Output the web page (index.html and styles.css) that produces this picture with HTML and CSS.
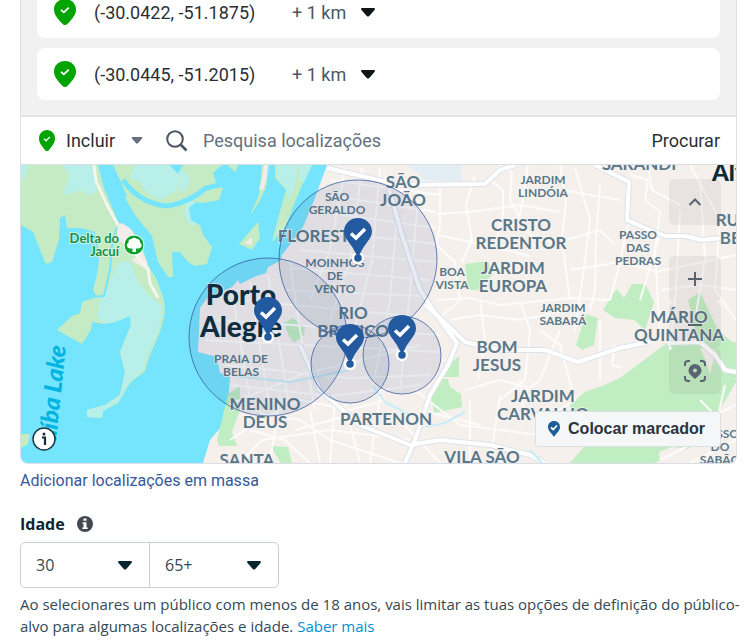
FILE: index.html
```html
<!DOCTYPE html>
<html lang="pt">
<head>
    <meta charset="UTF-8">
    <meta name="viewport" content="width=device-width, initial-scale=1.0">
    <title>Localizações</title>
    <link rel="stylesheet" href="styles.css">
</head>
<body>
    <svg class="defs" aria-hidden="true">
        <symbol id="pin" viewBox="0 0 22 26" preserveAspectRatio="none">
            <path fill="#00a400" d="M11 0C4.800 0 0 4.500 0 10.400c0 5.200 3.700 9 7.600 13.600 2.300 2.700 4.500 2.700 6.800 0C18.300 19.400 22 15.600 22 10.400 22 4.500 17.200 0 11 0z"/>
            <path fill="none" stroke="#fff" stroke-width="1.800" d="M7 10.800l2.800 2.500 5-4.600"/>
        </symbol>
        <symbol id="caret" viewBox="0 0 14 9">
            <path fill="currentColor" d="M1.500 0h11C14 0 14.300 1.100 13.500 2L8.500 7.800c-1 1.100-2 1.100-3 0L.5 2C-.3 1.100 0 0 1.500 0z"/>
        </symbol>
    </svg>

    <div class="panel">
        <ul class="locations">
            <li class="location">
                <svg class="pin"><use href="#pin"/></svg>
                <span class="coords">(-30.0422, -51.1875)</span>
                <span class="dropdown">
                    <select class="radius" aria-label="Raio"><option>+ 1 km</option></select>
                    <svg class="caret"><use href="#caret"/></svg>
                </span>
            </li>
            <li class="location">
                <svg class="pin"><use href="#pin"/></svg>
                <span class="coords">(-30.0445, -51.2015)</span>
                <span class="dropdown">
                    <select class="radius" aria-label="Raio"><option>+ 1 km</option></select>
                    <svg class="caret"><use href="#caret"/></svg>
                </span>
            </li>
        </ul>

        <div class="search-bar">
            <svg class="pin small"><use href="#pin"/></svg>
            <span class="dropdown">
                <select class="mode" aria-label="Incluir ou excluir"><option>Incluir</option></select>
                <svg class="caret grey"><use href="#caret"/></svg>
            </span>
            <svg class="search-icon" viewBox="0 0 22 22">
                <circle cx="9" cy="9" r="7.800" fill="none" stroke="#4b5664" stroke-width="2"/>
                <path d="M14.500 14.500l6 6" stroke="#4b5664" stroke-width="2.600"/>
            </svg>
            <input class="search" type="text" placeholder="Pesquisa localizações" aria-label="Pesquisa localizações">
            <button class="browse" type="button">Procurar</button>
        </div>

        <div class="map">
            <svg class="map-canvas" viewBox="21 165 715 298">
                <rect x="21" y="165" width="715" height="298" fill="#75e5fe"/>

                <!-- delta islands -->
                <g fill="#c4ebc4">
                    <path d="M21 165H98L104 188 118 222 132 230 142 246 148 265 157 280 164 300 165 312 160 332 150 355 145 371 130 383 118 403 103 411 102 418 87 417 87 410 105 405 120 395 125 372 120 352 131 325 130 316 115 322 104 324 92 322 91 330 82 344 57 330 72 316 80 313 82 302 97 297 93 290 97 275 99 260 98 245 95 232 80 228 67 228 65 215 60 218 59 240 52 262 46 264 40 250 33 232 21 225z"/>
                    <path d="M113 165H222L213 173 217 186 223 188 219 200 203 203 188 201 186 212 190 222 200 225 203 235 212 247 207 264 195 266 188 262 180 252 172 252 173 277 168 277 158 262 152 236 135 215 125 198 127 196 120 180z"/>
                    <path d="M228 165H238L236 172 230 168z"/>
                    <path d="M262 165H269L266 188 258 204 250 215 259 195z"/>
                    <path d="M258 222L260 238 252 250 239 244z"/>
                    <path d="M275 165H312L302 185 293 207 286 226 272 242 276 226 282 204 286 190 275 178z"/>
                    <path d="M21 434H30L28 444 21 448z"/>
                </g>
                <g fill="#b8efe8">
                    <path d="M63 165H93L97 190 90 196 81 190 62 196 70 175z"/>
                    <path d="M21 165H28L24 178 21 182z"/>
                    <path d="M135 165H182L177 190 160 200 146 192 140 182 130 178z"/>
                    <path d="M115 268L122 261 131 263 137 280 149 295 163 307 158 332 148 355 143 370 130 382 117 402 103 411 102 418 87 417 87 410 105 405 120 395 125 372 120 352 131 325 130 316 115 322 104 324 97 316 100 299 108 288z"/>
                    <path d="M277 165H298L294 190 288 200 286 188 277 178z"/>
                    <path d="M300 165H312L304 182 299 180z"/>
                    <path d="M187 200L196 202 189 208 191 220 198 224 190 226 184 214z"/>
                    <path d="M180 168L190 178 186 190 180 192z"/>
                </g>
                <path fill="#f3ece8" d="M117 226L122 223 131 229 137 240 147 262 147 270 131 260 138 256 128 246 117 240z"/>
                <path fill="#f3ece8" d="M244 243L252 237 252 245z"/>
                <path fill="none" stroke="#75e5fe" stroke-width="5" d="M123 180Q140 204 168 206Q190 202 206 188L224 184"/>
                <path fill="none" stroke="#75e5fe" stroke-width="2" d="M117 227L112 245 110 270 104 296 88 297"/>
                <path fill="none" stroke="#f8f5ef" stroke-width="3" stroke-linejoin="round" d="M94 165L96 181 107 205 118 225M135 254L148 269 150 283 158 298"/>
                <path fill="none" stroke="#f3ece8" stroke-width="4" d="M266 165L264 180 261 190"/>
                <path stroke="#75e5fe" fill="#75e5fe" stroke-width="2" d="M171 165H182L178 172z"/>

                <!-- mainland -->
                <path fill="#f6f0ed" d="M327 165L315 198 303 227 282 255 280 261 268 267 266 273 254 277 240 284 238 280 232 287 207 298 200 308 198 352 217 357 220 373 230 376 227 420 210 440 203 463H736V165z"/>
                <path fill="#e3edf4" d="M408 165H462L461 182 425 180z"/>
                <g fill="#c1edc2">
                    <path d="M228 394L240 386 240 410 232 432 237 446 219 446 217 440z"/>
                    <path d="M270 446L288 447 292 463H281z"/>
                    <path d="M284 323L293 318 305 327 304 335 294 343 288 334z"/>
                    <path d="M465 264L488 261 493 274 478 290 468 290z"/>
                    <path d="M459 356V377H442L448 366z"/>
                    <path d="M437 379H448L450 387 461 394 462 407 434 413 431 396z"/>
                    <path d="M603 310L612 295 617 289 624 298 632 284 645 284 654 302 645 330 634 320 615 318z"/>
                    <path d="M586 314L598 318 594 345 582 350 576 345z"/>
                    <path d="M736 342L710 350 690 340 667 343 648 357 620 378 602 386 585 392 570 405 575 420 590 440 570 463H655L690 448 722 406 736 382z"/>
                    <path d="M688 300L700 292 718 330 736 345V372L700 350z"/>
                    <path d="M660 375L680 360 690 372 700 362 712 345 700 340 680 345z"/>
                </g>
                <path fill="#f6f0ed" d="M659 452L672 447 695 450 690 463H660zM700 348L716 350 710 374 706 362z"/>

                <!-- minor streets -->
                <g fill="none" stroke="#fdfcfb" stroke-width="2" stroke-linejoin="round">
                    <path d="M330 180L440 195M325 195L436 212M322 212L436 228M312 230L436 244M300 250L436 262M290 268L430 280M285 290L420 296M240 300L410 316M215 320L440 335M205 340L300 345 440 352M225 365L350 378 430 375M230 385L330 396 420 385"/>
                    <path d="M345 168L330 250 310 300M362 168L350 260 330 320M380 168L372 260 352 340M398 200L390 300 372 390M418 200L410 290 400 390M232 290L250 400M250 282L270 410M268 275L290 410M290 262L300 330 315 410M228 405L300 375 420 345"/>
                    <path d="M440 182V225L436 244 455 262 460 300 438 320M475 175L466 205 472 240 462 262M490 180L503 190V215L495 245M436 214L470 212 520 205 560 212M437 235L480 244 530 256M500 166L512 172 510 200 530 235 560 245M528 165L525 185 520 215M560 165L566 200 562 240 570 300"/>
                    <path d="M436 300L470 298 500 305 530 302 570 298 610 300M450 320L480 315 520 320 560 312M480 300L485 340 478 380M520 300L530 330 525 380 500 400M540 330L560 345 575 400 550 415M465 390L500 380 530 388M470 400V463M500 395L490 463M520 380L525 420"/>
                    <path d="M575 168L590 220 585 260 575 330M600 185L596 240 595 290 590 310M628 225L618 270 610 300M630 175L648 180 645 200 660 212 655 250 660 340M648 165L652 190 680 205M680 210L676 290 670 350M700 180L705 260 695 320M562 190L620 200M566 240L600 230 615 245M570 270L620 262 660 272M655 272L736 255M660 290L700 285 736 290M660 235L640 300M690 165L720 220 715 290 736 320"/>
                    <path d="M240 400L265 415 300 420 330 440 400 463M230 440L260 420 300 400 350 410 385 400M280 395L270 463M310 410L320 463M335 400L330 463M345 405L360 463M380 395L370 463M240 463L262 440 330 430 410 440M250 430L285 440 310 463M415 390L460 425 540 435M420 410L480 425M400 420L440 463M295 430L350 415M560 330L540 380 520 395M600 320V380M615 345L612 365 622 368M700 400L715 415 736 405M725 385L715 430 736 440M690 463L736 440M660 460L700 440"/>
                </g>
                <!-- avenues -->
                <g fill="none" stroke-linejoin="round">
                    <g stroke="#dde3ec" stroke-width="6">
                        <path d="M327 168L400 185 485 184 500 170 515 165"/>
                        <path d="M385 175L402 235 420 290 440 320 457 343 448 365 430 395 415 440 405 463"/>
                        <path d="M425 305L440 318 465 342 500 350 545 350 578 362 620 348 650 342"/>
                        <path d="M595 165L629 182 627 220 645 228 665 236 685 236 702 240 722 238 736 242"/>
                        <path d="M300 345L320 390 360 425 410 445 440 440 490 445 530 455 545 463"/>
                        <path d="M668 343L700 342 715 355 725 370 736 372"/>
                    </g>
                    <g stroke="#fff" stroke-width="4">
                        <path d="M327 168L400 185 485 184 500 170 515 165"/>
                        <path d="M385 175L402 235 420 290 440 320 457 343 448 365 430 395 415 440 405 463"/>
                        <path d="M425 305L440 318 465 342 500 350 545 350 578 362 620 348 650 342"/>
                        <path d="M595 165L629 182 627 220 645 228 665 236 685 236 702 240 722 238 736 242"/>
                        <path d="M300 345L320 390 360 425 410 445 440 440 490 445 530 455 545 463"/>
                        <path d="M668 343L700 342 715 355 725 370 736 372"/>
                    </g>
                    <path stroke="#c7eef8" stroke-width="2" d="M232 376L290 382 350 370M372 385L385 402 410 415M425 427L445 423 465 412M530 450L542 463"/>
                </g>

                <!-- place labels -->
                <g class="label small-label">
                    <text x="337" y="201">SÃO</text><text x="337" y="214">GERALDO</text>
                    <text x="335" y="267">MOINHOS</text><text x="335" y="280">DE</text><text x="335" y="293">VENTO</text>
                    <text x="241" y="363">PRAIA DE</text><text x="241" y="376">BELAS</text>
                    <text x="452" y="276">BOA</text><text x="452" y="289">VISTA</text>
                    <text x="543" y="184">JARDIM</text><text x="543" y="197">LINDÓIA</text>
                    <text x="638" y="239">PASSO</text><text x="638" y="252">DAS</text><text x="638" y="265">PEDRAS</text>
                    <text x="563" y="312">JARDIM</text><text x="563" y="325">SABARÁ</text>
                    <text x="720" y="438">PASSO</text><text x="720" y="451">DO</text><text x="720" y="464">SABÃO</text>
                </g>
                <g class="label">
                    <text x="403" y="188">SÃO</text><text x="403" y="206">JOÃO</text>
                    <text x="319" y="242">FLORESTA</text>
                    <text x="353" y="319">RIO</text><text x="353" y="337">BRANCO</text>
                    <text x="265" y="410">MENINO</text><text x="265" y="428">DEUS</text>
                    <text x="247" y="466">SANTA</text>
                    <text x="386" y="425">PARTENON</text>
                    <text x="482" y="463">VILA SÃO</text>
                    <text x="513" y="274">JARDIM</text><text x="513" y="292">EUROPA</text>
                    <text x="521" y="231">CRISTO</text><text x="521" y="249">REDENTOR</text>
                    <text x="639" y="170">SARANDI</text>
                    <text x="679" y="323">MÁRIO</text><text x="679" y="341">QUINTANA</text>
                    <text x="497" y="353">BOM</text><text x="497" y="371">JESUS</text>
                    <text x="543" y="402">JARDIM</text><text x="543" y="420">CARVALHO</text>
                    <text x="746" y="226">RUBEM</text><text x="746" y="244">BERTA</text>
                </g>
                <g class="label city">
                    <text x="241" y="305">Porto</text><text x="241" y="337">Alegre</text>
                </g>
                <text class="label city near" x="712" y="181">Alvorada</text>
                <g class="label park">
                    <text x="119" y="243">Delta do</text><text x="119" y="256">Jacuí</text>
                </g>
                <text class="lake" transform="translate(66 346) rotate(-84)">aíba Lake</text>
                <circle cx="134" cy="245" r="10" fill="#0aa12c" stroke="#fff"/>
                <path fill="#fff" d="M132.500 252v-3.500h-3a3.200 3.200 0 0 1-1-6 3.200 3.200 0 0 1 3-3.500 4 4 0 0 1 5.500 0 3.200 3.200 0 0 1 3 3.500 3.200 3.200 0 0 1-1 6h-3v3.500z"/>

                <!-- targeting radius -->
                <g fill="#2a4f85" fill-opacity=".11" stroke="#31589d" stroke-opacity=".75">
                    <circle cx="358" cy="259" r="79"/>
                    <circle cx="268" cy="337" r="79"/>
                    <circle cx="350" cy="364" r="39"/>
                    <circle cx="402" cy="355" r="39"/>
                </g>

                <g id="marker" transform="translate(358 258)">
                    <circle r="5" fill="#235a9f" stroke="#fff" stroke-width="2.500"/>
                    <path fill="#235a9f" d="M0-40C-8-40-14-34-14-26.500-14-19-6-14-2-4Q0-1 2-4C6-14 14-19 14-26.500 14-34 8-40 0-40z"/>
                    <path fill="none" stroke="#fff" stroke-width="3.500" d="M-7-24.500l5 4.500 9-9"/>
                </g>
                <use href="#marker" x="-90" y="79"/>
                <use href="#marker" x="-8" y="106"/>
                <use href="#marker" x="44" y="97"/>
            </svg>

            <button class="attribution" type="button" aria-label="Informações do mapa">
                <svg viewBox="0 0 24 24">
                    <circle cx="12" cy="12" r="11" fill="#fff" stroke="#1c3a44" stroke-width="1.500"/>
                    <path d="M10 10.500h3V18" fill="none" stroke="#1c2b33" stroke-width="2.200"/>
                    <circle cx="12" cy="7" r="1.500" fill="#1c2b33"/>
                </svg>
            </button>

            <div class="controls">
                <button class="control" type="button" aria-label="Recolher">
                    <svg viewBox="0 0 24 24"><path d="M6.500 15l5.500-5.500 5.500 5.500"/></svg>
                </button>
                <div class="control-group">
                    <button class="control" type="button" aria-label="Ampliar">
                        <svg viewBox="0 0 24 24"><path d="M12 5v14M5 12h14"/></svg>
                    </button>
                    <button class="control" type="button" aria-label="Reduzir">
                        <svg viewBox="0 0 24 24"><path d="M5 12h14"/></svg>
                    </button>
                    <button class="control" type="button" aria-label="Centrar">
                        <svg viewBox="0 0 24 24">
                            <path d="M2 7V5q0-3 3-3h2M17 2h2q3 0 3 3v2M22 17v2q0 3-3 3h-2M7 22H5q-3 0-3-3v-2"/>
                            <path class="solid" d="M12 5a6.500 6.500 0 0 0-6.500 6.500c0 3.500 3.500 5.500 6.500 8.500 3-3 6.500-5 6.500-8.500A6.500 6.500 0 0 0 12 5zm0 4.500a2 2 0 1 1 0 4 2 2 0 0 1 0-4z"/>
                        </svg>
                    </button>
                </div>
            </div>

            <button class="drop-pin" type="button">
                <svg viewBox="0 0 12 16">
                    <path fill="#1b5f96" d="M6 0C2.500 0 0 2.500 0 6c0 4 4 6.500 6 10 2-3.500 6-6 6-10 0-3.500-2.500-6-6-6z"/>
                    <path fill="none" stroke="#fff" stroke-width="1.700" d="M3 6.500l2.200 2L9 4.500"/>
                </svg>
                Colocar marcador
            </button>
        </div>
    </div>

    <a class="bulk" href="#">Adicionar localizações em massa</a>

    <div class="age">
        <div class="age-title">
            <h2>Idade</h2>
            <svg viewBox="0 0 16 16">
                <circle cx="8" cy="8" r="8" fill="#444950"/>
                <path fill="#fff" d="M6.500 2.500h3v2.300h-3zM5.500 6.200h4v5.300h1.200V13H5.300v-1.500h1.200V7.700h-1z"/>
            </svg>
        </div>
        <div class="age-range">
            <span class="dropdown">
                <select aria-label="Idade mínima"><option>30</option></select>
                <svg class="caret"><use href="#caret"/></svg>
            </span>
            <span class="dropdown">
                <select aria-label="Idade máxima"><option>65+</option></select>
                <svg class="caret"><use href="#caret"/></svg>
            </span>
        </div>
        <p>Ao selecionares um público com menos de 18 anos, vais limitar as tuas opções de definição do público-alvo para algumas localizações e idade. <a href="#">Saber mais</a></p>
    </div>
</body>
</html>
```
FILE: styles.css
```css
* {
    box-sizing: border-box;
}
body {
    margin: 0;
    padding: 0 8px 0 20px;
    font-family: Roboto, Arial, sans-serif;
    font-size: 18px;
    color: #2b2f33;
    background: #fff;
    overflow: hidden;
}
button, select, input {
    font: inherit;
    color: inherit;
    background: none;
    border: none;
    padding: 0;
    margin: 0;
}
select {
    appearance: none;
    width: 100%;
}
a {
    text-decoration: none;
}
svg {
    display: block;
    flex: none;
}
.defs {
    position: absolute;
    width: 0;
    height: 0;
}
.panel {
    margin-right: 9px;
    border: 1px solid #dadfe6;
    border-top: none;
    border-radius: 0 0 8px 8px;
    overflow: hidden;
}

/* selected locations, scrolled to the last one */
.locations {
    display: flex;
    flex-direction: column;
    justify-content: flex-end;
    gap: 10px;
    height: 115px;
    margin: 0;
    padding: 0 16px 15px;
    list-style: none;
    background: #f1f1f1;
    overflow: hidden;
}
.location {
    display: flex;
    flex: none;
    align-items: center;
    height: 52px;
    padding: 0 17px;
    background: #fff;
    border-radius: 8px;
}
.pin {
    width: 22px;
    height: 26px;
}
.pin.small {
    width: 16px;
    height: 21px;
}
.coords {
    width: 198px;
    margin-left: 18px;
}
.dropdown {
    position: relative;
    display: block;
}
.caret {
    position: absolute;
    top: 50%;
    right: 0;
    width: 14px;
    height: 9px;
    margin-top: -4px;
    color: #101518;
    pointer-events: none;
}
.caret.grey {
    width: 12px;
    height: 7px;
    color: #65707e;
}
.radius {
    width: 83px;
    color: #4b5664;
}

.search-bar {
    display: flex;
    align-items: center;
    height: 50px;
    padding: 0 16px 0 18px;
    border-top: 2px solid #e2e6ea;
    border-bottom: 1px solid #dadfe6;
}
.mode {
    width: 77px;
}
.search-bar .dropdown {
    margin: 0 23px 0 11px;
}
.search-icon {
    width: 22px;
    height: 22px;
}
.search {
    flex: 1;
    min-width: 0;
    margin-left: 15px;
    outline: none;
}
.search::placeholder {
    color: #65707e;
    opacity: 1;
}

.map {
    position: relative;
}
.map-canvas {
    width: 100%;
    height: auto;
}
.label {
    font-family: Lato, sans-serif;
    font-size: 17px;
    font-weight: 700;
    text-anchor: middle;
    fill: #5b7888;
    stroke: #f6f3f2;
    stroke-width: 2px;
    stroke-opacity: 0.8;
    paint-order: stroke;
}
.small-label {
    font-size: 12px;
}
.city {
    font-size: 28px;
    font-weight: 900;
    fill: #0b2a38;
}
.near {
    font-size: 24px;
    text-anchor: start;
}
.park {
    font-size: 13px;
    text-anchor: end;
    fill: #12914a;
    stroke: #e4f5e4;
}
.lake {
    font-family: Lato, sans-serif;
    font-size: 24px;
    font-weight: 900;
    font-style: italic;
    text-anchor: end;
    fill: #00b4e2;
}
.attribution {
    position: absolute;
    left: 11px;
    bottom: 12px;
    width: 24px;
    height: 24px;
}
.controls {
    position: absolute;
    top: 14px;
    right: 15px;
    display: flex;
    flex-direction: column;
    gap: 31px;
}
.control {
    display: flex;
    align-items: center;
    justify-content: center;
    width: 52px;
    height: 46px;
    background: rgba(60, 60, 60, 0.07);
    border-radius: 6px;
}
.control svg {
    width: 24px;
    height: 24px;
    fill: none;
    stroke: #5a6470;
    stroke-width: 2;
}
.control .solid {
    fill: #5a6470;
    stroke: none;
}
.drop-pin {
    position: absolute;
    right: 15px;
    bottom: 16px;
    display: flex;
    align-items: center;
    gap: 8px;
    height: 36px;
    padding: 0 15px 0 12px;
    background: #f5f6f7;
    border: 1px solid #dcdfe4;
    border-radius: 3px;
    font-family: "Liberation Sans", Arial, sans-serif;
    font-size: 16px;
    font-weight: 700;
    color: #2b3340;
    white-space: nowrap;
}
.drop-pin svg {
    width: 12px;
    height: 16px;
}

.bulk {
    display: block;
    margin-top: 6px;
    font-size: 16px;
    line-height: 22px;
    color: #385898;
}
.age {
    margin-top: 21px;
    font-family: "Open Sans", "Segoe UI", sans-serif;
    font-size: 15px;
    color: #344854;
}
.age-title {
    display: flex;
    align-items: center;
    gap: 12px;
}
.age-title svg {
    width: 16px;
    height: 16px;
}
.age h2 {
    margin: 0;
    font-size: 16px;
    line-height: 22px;
    color: #0a2530;
}
.age-range {
    display: inline-flex;
    height: 46px;
    margin-top: 7px;
    border: 1px solid #c9d2dc;
    border-radius: 5px;
}
.age-range .dropdown {
    width: 128px;
}
.age-range .dropdown + .dropdown {
    width: 129px;
    border-left: 1px solid #c9d2dc;
}
.age-range select {
    height: 100%;
    padding-left: 15px;
    font-size: 16px;
}
.age-range .caret {
    right: 17px;
    color: #0a2530;
}
.age p {
    margin: 5px 0 0;
    line-height: 22px;
}
.age p a {
    color: #0090d0;
}
```
